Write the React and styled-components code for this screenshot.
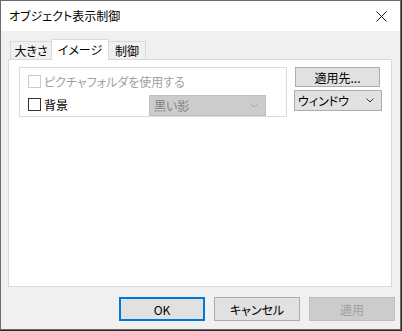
import styled, { createGlobalStyle } from 'styled-components';

const GlobalStyle = createGlobalStyle`
    html, body {
        margin: 0;
        padding: 0;
        background: #2b2b2b;
        font-family: "Noto Sans CJK JP", "Noto Sans", sans-serif;
        font-size: 12px;
        font-feature-settings: "palt";
    }
`;

function Checkbox({ label, disabled }) {
    return (
        <CheckRow disabled={disabled}>
            <Box disabled={disabled} />
            <span>{label}</span>
        </CheckRow>
    );
}

function Chevron({ color }) {
    return (
        <svg width="8" height="5" viewBox="0 0 8 5">
            <path d="M0.5 0.5 L4 4 L7.5 0.5" fill="none" stroke={color} strokeWidth="1" />
        </svg>
    );
}

export default function App() {
    return (
        <>
            <GlobalStyle />
            <Window>
                <TitleBar>
                    <Title>オブジェクト表示制御</Title>
                    <CloseIcon width="11" height="11" viewBox="0 0 11 11">
                        <path d="M0.5 0.5 L10.5 10.5 M10.5 0.5 L0.5 10.5" stroke="#1a1a1a" strokeWidth="1" />
                    </CloseIcon>
                </TitleBar>
                <Body>
                    <Tabs>
                        <Tab width={42}>大きさ</Tab>
                        <Tab active width={58}>イメージ</Tab>
                        <Tab width={38}>制御</Tab>
                    </Tabs>
                    <Panel>
                        <Group>
                            <Checkbox label="ピクチャフォルダを使用する" disabled />
                            <BgRow>
                                <Checkbox label="背景" />
                                <Select disabled>
                                    <span>黒い影</span>
                                    <Chevron color="#a8a8a8" />
                                </Select>
                            </BgRow>
                        </Group>
                        <SideColumn>
                            <SmallButton>適用先...</SmallButton>
                            <SideSelect>
                                <span>ウィンドウ</span>
                                <Chevron color="#333" />
                            </SideSelect>
                        </SideColumn>
                    </Panel>
                    <Footer>
                        <Button primary>OK</Button>
                        <Button>キャンセル</Button>
                        <Button disabled>適用</Button>
                    </Footer>
                </Body>
            </Window>
        </>
    );
}

const Window = styled.div`
    width: 401px;
    height: 330px;
    box-sizing: border-box;
    border: 1px solid #6b6b6b;
    background: #f0f0f0;
    display: flex;
    flex-direction: column;
`;

const TitleBar = styled.div`
    height: 30px;
    background: #ffffff;
    display: flex;
    align-items: center;
    justify-content: space-between;
    padding: 0 9px 0 8px;
    flex-shrink: 0;
`;

const Title = styled.div`
    color: #000;
    font-size: 12px;
    line-height: 16px;
`;

const CloseIcon = styled.svg`
    display: block;
    margin-right: 4px;
`;

const Body = styled.div`
    flex: 1;
    display: flex;
    flex-direction: column;
    padding: 8px 8px 0 7px;
`;

const Tabs = styled.div`
    display: flex;
    align-items: flex-end;
    height: 21px;
    padding-left: 2px;
    position: relative;
    z-index: 1;
    margin-bottom: -1px;
`;

const Tab = styled.div`
    box-sizing: border-box;
    width: ${(p) => p.width}px;
    height: ${(p) => (p.active ? '21px' : '19px')};
    margin: ${(p) => (p.active ? '0 -1px' : '0')};
    background: ${(p) => (p.active ? '#ffffff' : '#f0f0f0')};
    border: 1px solid #d9d9d9;
    border-bottom: ${(p) => (p.active ? 'none' : '1px solid #d9d9d9')};
    display: flex;
    align-items: center;
    justify-content: center;
    font-size: 12px;
    line-height: 16px;
    color: #000;
    padding-top: ${(p) => (p.active ? '0' : '1px')};
    position: relative;
    z-index: ${(p) => (p.active ? 2 : 1)};
`;

const Panel = styled.div`
    box-sizing: border-box;
    height: 228px;
    background: #ffffff;
    border: 1px solid #d9d9d9;
    display: flex;
    align-items: flex-start;
    padding: 7px 0 0 10px;
`;

const Group = styled.div`
    box-sizing: border-box;
    width: 268px;
    height: 50px;
    border: 1px solid #dcdcdc;
    padding: 6px 0 0 8px;
    display: flex;
    flex-direction: column;
    gap: 4px;
`;

const CheckRow = styled.div`
    display: flex;
    align-items: center;
    gap: 3px;
    height: 15px;
    font-size: 12px;
    line-height: 15px;
    color: ${(p) => (p.disabled ? '#a0a0a0' : '#000')};
`;

const Box = styled.div`
    box-sizing: border-box;
    width: 13px;
    height: 13px;
    border: 1px solid ${(p) => (p.disabled ? '#cccccc' : '#333333')};
    background: #fff;
`;

const BgRow = styled.div`
    display: flex;
    align-items: center;
    justify-content: space-between;
    width: 238px;
`;

const Select = styled.div`
    box-sizing: border-box;
    width: 117px;
    height: 21px;
    margin-top: 2px;
    background: #cccccc;
    border: 1px solid #bfbfbf;
    display: flex;
    align-items: center;
    justify-content: space-between;
    padding: 0 7px 0 4px;
    color: #838383;
    font-size: 12px;
`;

const SideColumn = styled.div`
    display: flex;
    flex-direction: column;
    gap: 3px;
    margin-left: 7px;
`;

const SmallButton = styled.div`
    box-sizing: border-box;
    width: 85px;
    height: 20px;
    margin-left: 1px;
    background: #e1e1e1;
    border: 1px solid #adadad;
    display: flex;
    align-items: center;
    justify-content: center;
    font-size: 12px;
    color: #000;
`;

const SideSelect = styled.div`
    box-sizing: border-box;
    width: 88px;
    height: 21px;
    background: #e1e1e1;
    border: 1px solid #adadad;
    display: flex;
    align-items: center;
    justify-content: space-between;
    padding: 0 7px 0 3px;
    font-size: 12px;
    color: #000;
`;

const Footer = styled.div`
    display: flex;
    justify-content: flex-end;
    gap: 9px;
    padding-top: 10px;
    margin-right: -3px;
`;

const Button = styled.div`
    box-sizing: border-box;
    width: 86px;
    height: 24px;
    display: flex;
    align-items: center;
    justify-content: center;
    font-size: 12px;
    background: ${(p) => (p.disabled ? '#cccccc' : '#e1e1e1')};
    border: ${(p) => (p.primary ? '2px solid #0078d7' : p.disabled ? '1px solid #bfbfbf' : '1px solid #adadad')};
    color: ${(p) => (p.disabled ? '#a0a0a0' : '#000')};
`;
